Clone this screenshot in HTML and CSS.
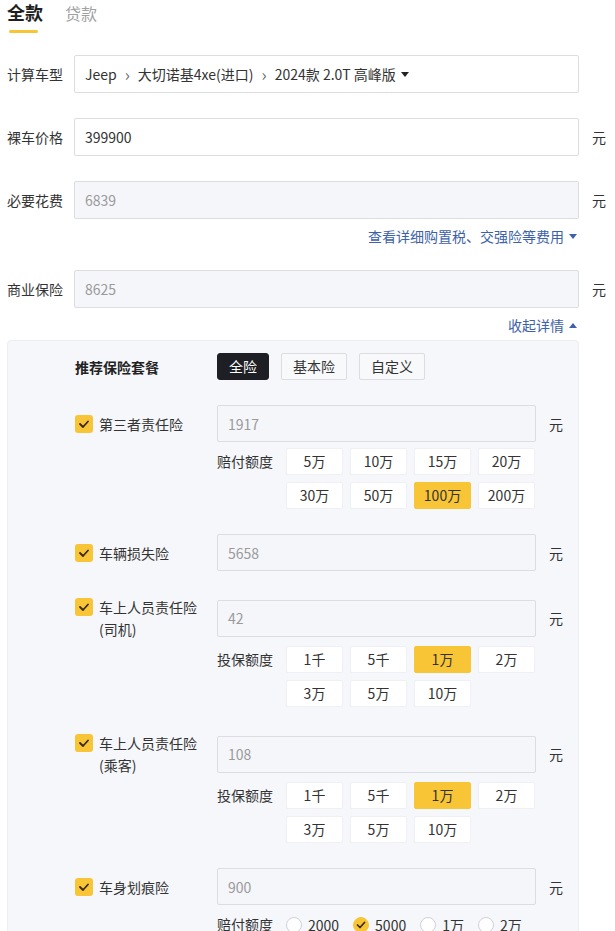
FILE: index.html
```html
<!DOCTYPE html>
<html lang="zh-CN">
<head>
<meta charset="utf-8">
<title>购车计算器</title>
<link rel="stylesheet" href="styles.css">
</head>
<body>
<div class="page">
  <div class="tabs">
    <div class="tab active">全款</div>
    <div class="tab">贷款</div>
  </div>

  <div class="form-row">
    <div class="label">计算车型</div>
    <div class="field">Jeep<span class="sep">›</span>大切诺基4xe(进口)<span class="sep">›</span>2024款 2.0T 高峰版<span class="tri tri-down dark"></span></div>
  </div>
  <div class="form-row">
    <div class="label">裸车价格</div>
    <div class="field">399900</div>
    <span class="unit">元</span>
  </div>
  <div class="form-row">
    <div class="label">必要花费</div>
    <div class="field disabled">6839</div>
    <span class="unit">元</span>
  </div>
  <div class="link-row first-link"><span class="link">查看详细购置税、交强险等费用<span class="tri tri-down"></span></span></div>
  <div class="form-row">
    <div class="label">商业保险</div>
    <div class="field disabled">8625</div>
    <span class="unit">元</span>
  </div>
  <div class="link-row second-link"><span class="link">收起详情<span class="tri tri-up"></span></span></div>

  <div class="panel">
    <div class="panel-head">
      <div class="panel-title">推荐保险套餐</div>
      <div class="pkgs">
        <span class="pkg active">全险</span>
        <span class="pkg">基本险</span>
        <span class="pkg">自定义</span>
      </div>
    </div>

    <div class="ins">
      <div class="ins-main">
        <div class="ins-name"><span class="cb"><svg viewBox="0 0 18 18" width="18" height="18"><polyline points="5,9 8,12 13,6.5" fill="none" stroke="#3a2a12" stroke-width="1.8" stroke-linecap="round" stroke-linejoin="round"/></svg></span><span class="ins-text">第三者责任险</span></div>
        <div class="field sm disabled">1917</div>
        <span class="unit">元</span>
      </div>
      <div class="opts">
        <div class="opt-label">赔付额度</div>
        <div class="opt-grid">
          <span class="opt">5万</span><span class="opt">10万</span><span class="opt">15万</span><span class="opt">20万</span>
          <span class="opt">30万</span><span class="opt">50万</span><span class="opt on">100万</span><span class="opt">200万</span>
        </div>
      </div>
    </div>

    <div class="ins">
      <div class="ins-main">
        <div class="ins-name"><span class="cb"><svg viewBox="0 0 18 18" width="18" height="18"><polyline points="5,9 8,12 13,6.5" fill="none" stroke="#3a2a12" stroke-width="1.8" stroke-linecap="round" stroke-linejoin="round"/></svg></span><span class="ins-text">车辆损失险</span></div>
        <div class="field sm disabled">5658</div>
        <span class="unit">元</span>
      </div>
    </div>

    <div class="ins">
      <div class="ins-main">
        <div class="ins-name"><span class="cb"><svg viewBox="0 0 18 18" width="18" height="18"><polyline points="5,9 8,12 13,6.5" fill="none" stroke="#3a2a12" stroke-width="1.8" stroke-linecap="round" stroke-linejoin="round"/></svg></span><span class="ins-text">车上人员责任险<br>(司机)</span></div>
        <div class="field sm disabled">42</div>
        <span class="unit">元</span>
      </div>
      <div class="opts">
        <div class="opt-label">投保额度</div>
        <div class="opt-grid">
          <span class="opt">1千</span><span class="opt">5千</span><span class="opt on">1万</span><span class="opt">2万</span>
          <span class="opt">3万</span><span class="opt">5万</span><span class="opt">10万</span>
        </div>
      </div>
    </div>

    <div class="ins">
      <div class="ins-main">
        <div class="ins-name"><span class="cb"><svg viewBox="0 0 18 18" width="18" height="18"><polyline points="5,9 8,12 13,6.5" fill="none" stroke="#3a2a12" stroke-width="1.8" stroke-linecap="round" stroke-linejoin="round"/></svg></span><span class="ins-text">车上人员责任险<br>(乘客)</span></div>
        <div class="field sm disabled">108</div>
        <span class="unit">元</span>
      </div>
      <div class="opts">
        <div class="opt-label">投保额度</div>
        <div class="opt-grid">
          <span class="opt">1千</span><span class="opt">5千</span><span class="opt on">1万</span><span class="opt">2万</span>
          <span class="opt">3万</span><span class="opt">5万</span><span class="opt">10万</span>
        </div>
      </div>
    </div>

    <div class="ins">
      <div class="ins-main">
        <div class="ins-name"><span class="cb"><svg viewBox="0 0 18 18" width="18" height="18"><polyline points="5,9 8,12 13,6.5" fill="none" stroke="#3a2a12" stroke-width="1.8" stroke-linecap="round" stroke-linejoin="round"/></svg></span><span class="ins-text">车身划痕险</span></div>
        <div class="field sm disabled">900</div>
        <span class="unit">元</span>
      </div>
      <div class="opts">
        <div class="opt-label">赔付额度</div>
        <div class="radios">
          <span class="radio"><span class="dot"></span>2000</span>
          <span class="radio on"><span class="dot"><svg viewBox="0 0 16 16" width="16" height="16"><polyline points="4.5,8 7,10.5 11.5,5.5" fill="none" stroke="#3a2a12" stroke-width="1.7" stroke-linecap="round" stroke-linejoin="round"/></svg></span>5000</span>
          <span class="radio"><span class="dot"></span>1万</span>
          <span class="radio"><span class="dot"></span>2万</span>
        </div>
      </div>
    </div>
  </div>
</div>
</body>
</html>
```

FILE: styles.css
```css
html, body {
  margin: 0;
  padding: 0;
  background: #ffffff;
  overflow: hidden;
  height: 931px;
}
body {
  font-family: "Noto Sans CJK SC", "Noto Sans", sans-serif;
  font-size: 14px;
  color: #333333;
}
.page {
  padding: 0 0 0 7px;
}

/* tabs */
.tabs {
  display: flex;
  align-items: baseline;
  gap: 22px;
  margin-bottom: 21px;
}
.tab {
  position: relative;
  font-size: 16px;
  line-height: 24px;
  color: #a0a0a0;
  padding-bottom: 9px;
}
.tab.active {
  font-size: 18px;
  font-weight: 700;
  color: #1f1f1f;
}
.tab.active::after {
  content: "";
  position: absolute;
  left: 2px;
  bottom: 0;
  width: 29px;
  height: 3px;
  border-radius: 2px;
  background: #f8c537;
}

/* form rows */
.form-row {
  display: flex;
  align-items: center;
  margin-bottom: 25px;
}
.form-row + .link-row { margin-top: -18px; }
.label {
  width: 67px;
  flex: none;
  line-height: 20px;
  color: #333333;
}
.field {
  box-sizing: border-box;
  width: 505px;
  height: 38px;
  border: 1px solid #dcdde1;
  border-radius: 2px;
  background: #ffffff;
  padding: 0 10px;
  display: flex;
  align-items: center;
  color: #333333;
  line-height: 20px;
  white-space: nowrap;
}
.field.disabled {
  background: #f5f6fa;
  color: #9a9a9a;
}
.field.sm {
  width: 319px;
  height: 37px;
}
.sep {
  color: #666666;
  font-size: 17px;
  margin: 0 8px;
}
.unit {
  margin-left: 13px;
  line-height: 20px;
  color: #333333;
}

/* triangles */
.tri {
  display: inline-block;
  width: 0;
  height: 0;
  margin-left: 5px;
  border-left: 4px solid transparent;
  border-right: 4px solid transparent;
}
.tri-down { border-top: 5px solid #3d62a8; }
.tri-up { border-bottom: 5px solid #3d62a8; }
.tri-down.dark { border-top-color: #222222; }

/* links */
.link-row {
  width: 572px;
  text-align: right;
  line-height: 20px;
  box-sizing: border-box;
  padding-right: 2px;
}
.first-link { margin-bottom: 24px; }
.second-link { margin-bottom: 5px; }
.link {
  color: #3d62a8;
  display: inline-flex;
  align-items: center;
}

/* panel */
.panel {
  box-sizing: border-box;
  width: 572px;
  border: 1px solid #eceef2;
  border-radius: 4px;
  background: #f6f7fa;
  padding: 12px 0 0 67px;
  height: 640px;
}
.panel-head {
  display: flex;
  align-items: center;
  margin-bottom: 25px;
}
.panel-title {
  width: 142px;
  font-weight: 700;
  line-height: 20px;
  color: #222222;
}
.pkgs {
  display: flex;
  gap: 12px;
}
.pkg {
  box-sizing: border-box;
  height: 27px;
  line-height: 25px;
  padding: 0 11px;
  border: 1px solid #dcdde1;
  border-radius: 2px;
  background: #f8f9fb;
  color: #333333;
}
.pkg.active {
  background: #1e1f24;
  border-color: #1e1f24;
  color: #ffffff;
  border-radius: 3px;
}

/* insurance items */
.ins {
  margin-bottom: 25px;
}
.ins-main {
  display: flex;
  align-items: center;
}
.ins-name {
  width: 142px;
  flex: none;
  display: flex;
  align-items: flex-start;
}
.cb {
  flex: none;
  width: 18px;
  height: 18px;
  margin-top: 2px;
  border-radius: 3px;
  background: #f8c537;
  display: flex;
}
.ins-text {
  margin-left: 6px;
  line-height: 22px;
  color: #333333;
}
.opts {
  display: flex;
  align-items: flex-start;
  margin-top: 6px;
  padding-left: 142px;
}
.opt-label {
  width: 69px;
  flex: none;
  line-height: 27px;
  color: #333333;
}
.opt-grid {
  display: grid;
  grid-template-columns: repeat(4, 57px);
  gap: 7px;
}
.opt {
  box-sizing: border-box;
  height: 27px;
  line-height: 25px;
  text-align: center;
  background: #ffffff;
  border: 1px solid #eef0f3;
  border-radius: 2px;
  color: #333333;
}
.opt.on {
  background: #f8c537;
  border-color: #f8c537;
}

/* radios */
.radios {
  display: flex;
  align-items: center;
  height: 27px;
  gap: 14px;
}
.radio {
  display: inline-flex;
  align-items: center;
  line-height: 20px;
  color: #333333;
}
.dot {
  box-sizing: border-box;
  width: 16px;
  height: 16px;
  border-radius: 50%;
  border: 1px solid #cfd1d6;
  background: #ffffff;
  margin-right: 6px;
  display: flex;
}
.radio.on .dot {
  background: #f8c537;
  border-color: #f8c537;
}
.radio.on .dot svg {
  margin: -1px;
}
```
